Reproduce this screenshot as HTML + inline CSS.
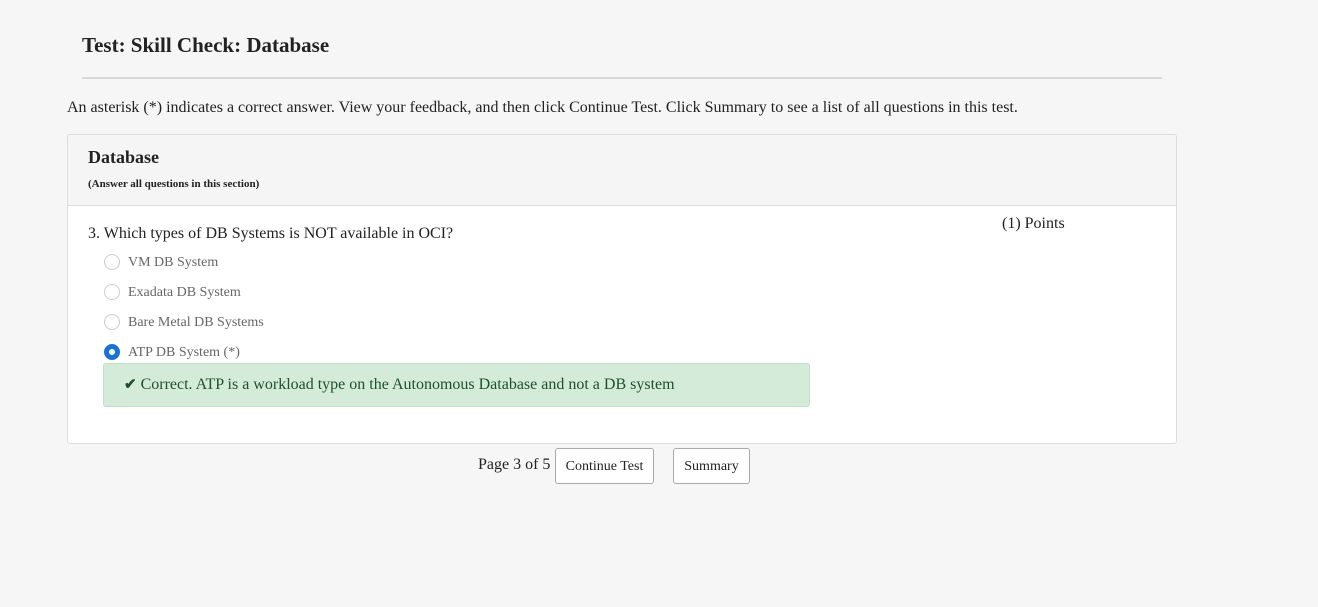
<!DOCTYPE html>
<html><head><style>
body{margin:0;width:1318px;height:607px;background:#f6f6f6;font-family:"Liberation Serif",serif;color:#222;position:relative;overflow:hidden}
.a{position:absolute}
h1{position:absolute;left:82px;top:33px;margin:0;font-size:21px;font-weight:bold;color:#222}
.hr{left:82px;top:77px;width:1080px;height:2px;background:#d8d8d8}
.intro{left:67px;top:99px;font-size:16px}
.card{left:67px;top:134px;width:1110px;height:310px;border:1px solid #ddd;border-radius:3px;background:#fff;overflow:hidden;box-sizing:border-box}
.head{position:absolute;left:0;top:0;width:100%;height:70px;background:#f5f5f5;border-bottom:1px solid #ddd}
.radio{position:absolute;left:36px;width:16px;height:16px;border:1px solid #ccc;border-radius:50%;box-sizing:border-box;background:#fff}
.opt{position:absolute;left:60px;font-size:14px;color:#666}
.btn{position:absolute;top:448px;height:36px;border:1px solid #aaa;border-radius:3px;background:#fff;font-size:14px;line-height:36px;text-align:center;box-sizing:border-box}
</style></head><body>
<h1>Test: Skill Check: Database</h1>
<div class="a hr"></div>
<div class="a intro">An asterisk (*) indicates a correct answer. View your feedback, and then click Continue Test. Click Summary to see a list of all questions in this test.</div>
<div class="a card">
 <div class="head">
  <div class="a" style="left:20px;top:12px;font-size:18px;font-weight:bold">Database</div>
  <div class="a" style="left:20px;top:43px;font-size:11px;font-weight:bold">(Answer all questions in this section)</div>
 </div>
 <div class="a" style="left:934px;top:80px;font-size:16px">(1) Points</div>
 <div class="a" style="left:20px;top:90px;font-size:16px">3. Which types of DB Systems is NOT available in OCI?</div>
 <div class="radio" style="top:119px"></div><div class="opt" style="top:120px">VM DB System</div>
 <div class="radio" style="top:149px"></div><div class="opt" style="top:150px">Exadata DB System</div>
 <div class="radio" style="top:179px"></div><div class="opt" style="top:180px">Bare Metal DB Systems</div>
 <div class="radio" style="top:209px;border:5px solid #1a73d0;background:#fff"></div><div class="opt" style="top:210px">ATP DB System (*)</div>
 <div class="a" style="left:35px;top:228px;width:707px;height:44px;background:#d4ebd9;border:1px solid #bfdfc6;border-radius:3px;font-size:16px;line-height:42px;color:#1e5128;box-sizing:border-box;padding-left:20px"><span style="color:#1e5128;font-size:15px;font-weight:bold">✔</span> Correct. ATP is a workload type on the Autonomous Database and not a DB system</div>
</div>
<div class="a" style="left:478px;top:456px;font-size:16px">Page 3 of 5</div>
<div class="btn" style="left:555px;width:99px">Continue Test</div>
<div class="btn" style="left:673px;width:77px">Summary</div>
</body></html>
